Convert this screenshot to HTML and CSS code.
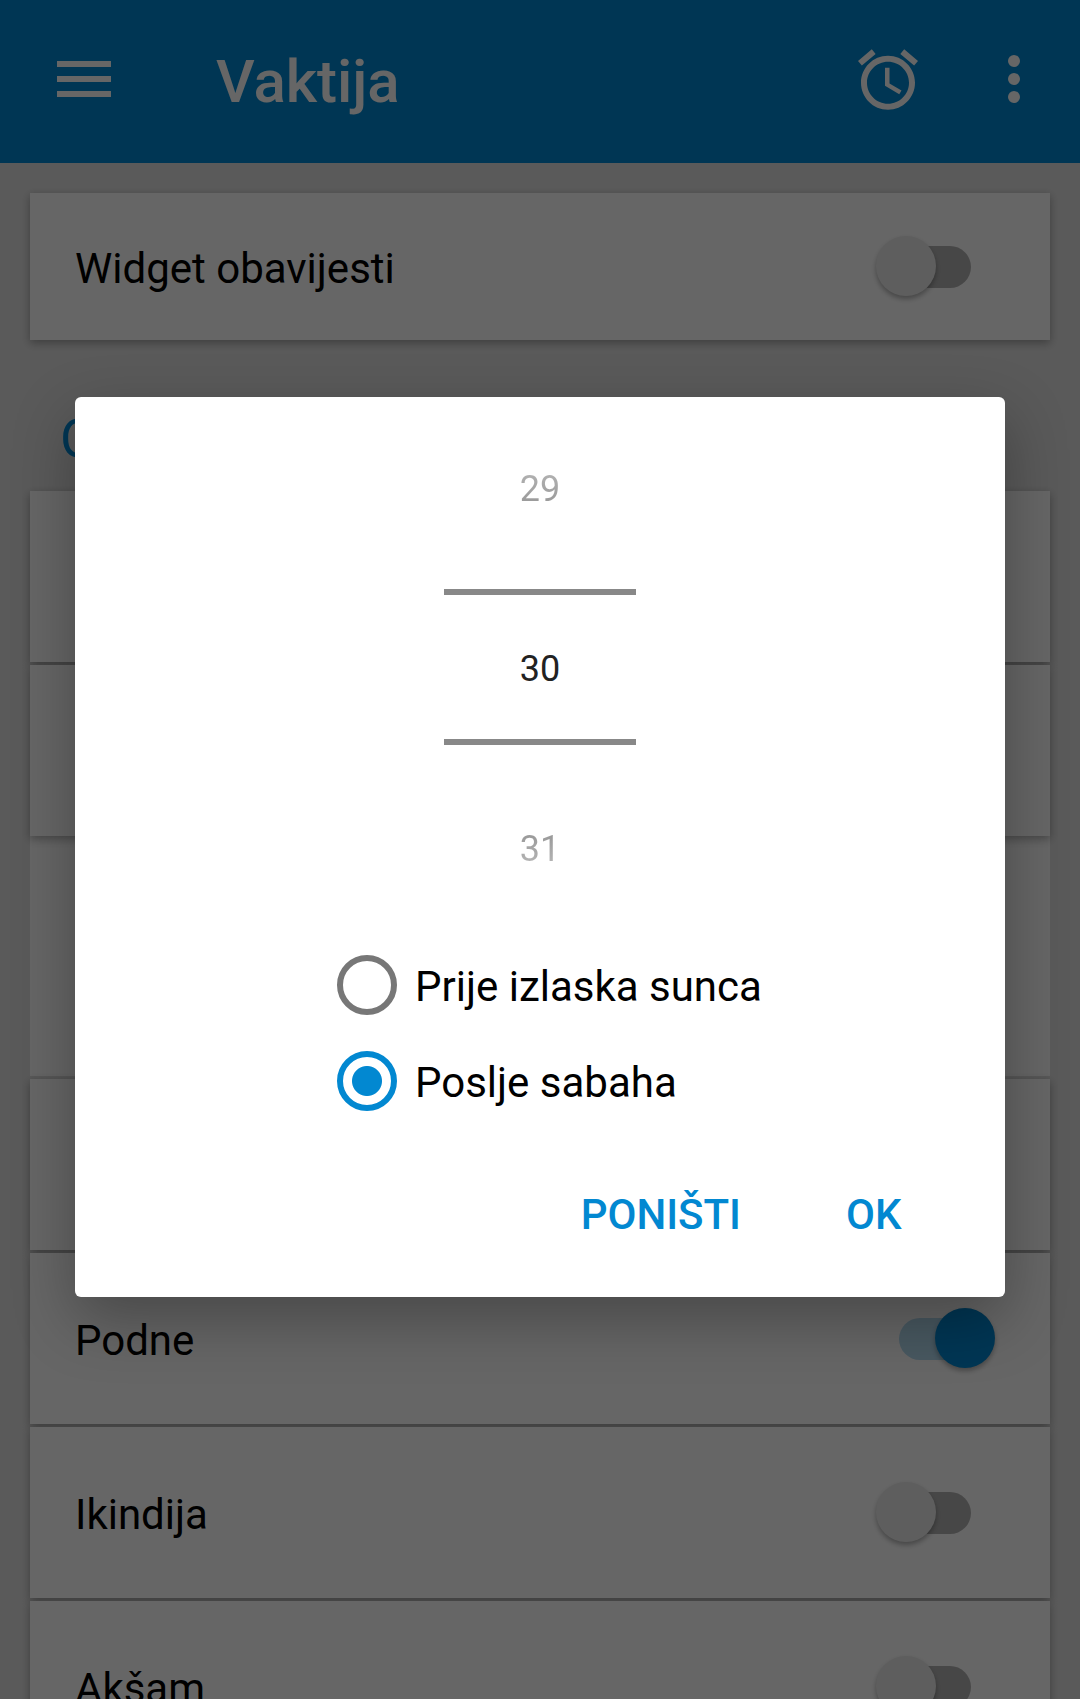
FILE: index.html
```html
<!DOCTYPE html>
<html lang="bs">
<head>
<meta charset="utf-8">
<title>Vaktija</title>
<link rel="stylesheet" href="styles.css">
</head>
<body>
<div class="screen">
  <header class="toolbar">
    <svg class="icon" viewBox="0 0 24 24"><path d="M3 18h18v-2H3v2zm0-5h18v-2H3v2zm0-7v2h18V6H3z"/></svg>
    <h1 class="title">Vaktija</h1>
    <svg class="icon" viewBox="0 -0.25 24 24"><path d="M22 5.72l-4.6-3.86-1.29 1.53 4.6 3.86L22 5.72zM7.88 3.39L6.6 1.86 2 5.71l1.29 1.53 4.59-3.85zM12.5 8H11v6l4.75 2.85.75-1.23-4-2.37V8zM12 4c-4.97 0-9 4.03-9 9s4.02 9 9 9c4.97 0 9-4.03 9-9s-4.03-9-9-9zm0 16c-3.87 0-7-3.13-7-7s3.13-7 7-7 7 3.13 7 7-3.13 7-7 7z"/></svg>
    <svg class="icon" viewBox="0 0 24 24"><circle cx="12" cy="6" r="2"/><circle cx="12" cy="12" r="2"/><circle cx="12" cy="18" r="2"/></svg>
  </header>
  <main class="content">
    <section class="list">
      <div class="card card-short"><span class="label">Widget obavijesti</span><span class="switch"></span></div>
    </section>
    <h2 class="section-title">O</h2>
    <section class="list">
      <div class="card"></div>
      <div class="card"></div>
      <div class="panel"></div>
      <div class="card"></div>
      <div class="card"><span class="label">Podne</span><span class="switch on"></span></div>
      <div class="card"><span class="label">Ikindija</span><span class="switch"></span></div>
      <div class="card"><span class="label">Akšam</span><span class="switch"></span></div>
    </section>
  </main>
  <div class="scrim">
    <div class="dialog" role="dialog">
      <div class="picker">
        <div class="value before">29</div>
        <div class="value current">30</div>
        <div class="value after">31</div>
      </div>
      <div class="options">
        <div class="option"><span class="radio"></span><span>Prije izlaska sunca</span></div>
        <div class="option"><span class="radio checked"></span><span>Poslje sabaha</span></div>
      </div>
      <div class="actions">
        <span class="action">PONIŠTI</span>
        <span class="action">OK</span>
      </div>
    </div>
  </div>
</div>
</body>
</html>
```
FILE: styles.css
```css
* { box-sizing: border-box; }

body {
  margin: 0;
  font-family: Roboto, "Noto Sans", sans-serif;
  font-size: 42px;
  color: #000;
}

.screen {
  position: relative;
  height: 1699px;
  overflow: hidden;
  background: #e2e2e2;
}

.toolbar {
  display: flex;
  align-items: center;
  height: 163px;
  padding: 0 30px 5px 48px;
  background: #0288d1;
}

.icon {
  flex: none;
  width: 72px;
  height: 72px;
  fill: #fff;
}

.icon + .icon { margin-left: 54px; }

.title {
  flex: 1;
  margin: 0;
  padding: 6px 0 0 96px;
  font-size: 60px;
  font-weight: 500;
  line-height: 70px;
  color: #fff;
}

.content { padding: 30px 30px 0; }

.list {
  display: flex;
  flex-direction: column;
  gap: 3px;
  isolation: isolate;
}

.card {
  position: relative;
  display: flex;
  align-items: center;
  justify-content: space-between;
  height: 171px;
  padding: 0 45px;
  background: #fff;
}

.card-short { height: 147px; }

/* Shadow sits on a layer below all the cards of a list */
.card::before {
  content: "";
  position: absolute;
  inset: 0;
  z-index: -1;
  box-shadow: 0 3px 9px rgba(0, 0, 0, 0.32);
}

.panel {
  position: relative;
  z-index: -2;
  height: 240px;
  margin-top: -3px;
  background: #fff;
}

.label {
  padding-top: 4px;
  line-height: 50px;
}

.section-title {
  height: 151px;
  margin: 0;
  padding: 67px 30px 0;
  font-size: 54px;
  font-weight: 400;
  line-height: 64px;
  color: #0288d1;
}

.switch {
  position: relative;
  width: 72px;
  height: 42px;
  margin-right: 34px;
  border-radius: 21px;
  background: #b2b2b2;
}

.switch::after {
  content: "";
  position: absolute;
  top: -9.5px;
  left: -23.5px;
  width: 60px;
  height: 60px;
  border-radius: 50%;
  background: #ebebeb;
  box-shadow: 0 3px 5px rgba(0, 0, 0, 0.3);
}

.switch.on { background: #b3dbf1; }

.switch.on::after {
  left: 35.5px;
  background: #0288d1;
}

.scrim {
  position: absolute;
  inset: 0;
  display: flex;
  align-items: center;
  justify-content: center;
  padding: 0 75px 5px;
  background: rgba(0, 0, 0, 0.6);
}

.dialog {
  width: 930px;
  height: 900px;
  border-radius: 6px;
  background: #fff;
  box-shadow: 0 22px 62px rgba(0, 0, 0, 0.3);
}

.picker {
  display: flex;
  flex-direction: column;
  align-items: center;
  padding-top: 12px;
  font-size: 36px;
  line-height: 42px;
}

.value {
  width: 192px;
  height: 180px;
  padding-top: 59px;
  text-align: center;
}

.current {
  height: 156px;
  padding-top: 53px;
  border: solid #888;
  border-width: 6px 0;
  color: #222;
}

.before,
.after {
  color: transparent;
  background-clip: text;
  -webkit-background-clip: text;
}

.before { background-image: linear-gradient(#d8d8d8, #b5b5b5 60px, #999 95px); }

.after {
  padding-top: 83px;
  background-image: linear-gradient(#909090 80px, #bbb 125px);
}

.options {
  display: flex;
  flex-direction: column;
  gap: 36px;
  padding: 30px 0 0 262px;
}

.option {
  display: flex;
  align-items: center;
  gap: 18px;
  height: 60px;
  line-height: 50px;
}

.option span:last-child { padding-top: 4px; }

.radio {
  width: 60px;
  height: 60px;
  border: 6px solid #777;
  border-radius: 50%;
}

.radio.checked {
  border-color: #0288d1;
  background: radial-gradient(circle, #0288d1 14.5px, #fff 15.5px);
}

.actions {
  display: flex;
  justify-content: flex-end;
  gap: 105px;
  padding: 79px 103.5px 0 0;
  font-weight: 500;
  line-height: 50px;
  color: #0288d1;
}
```
